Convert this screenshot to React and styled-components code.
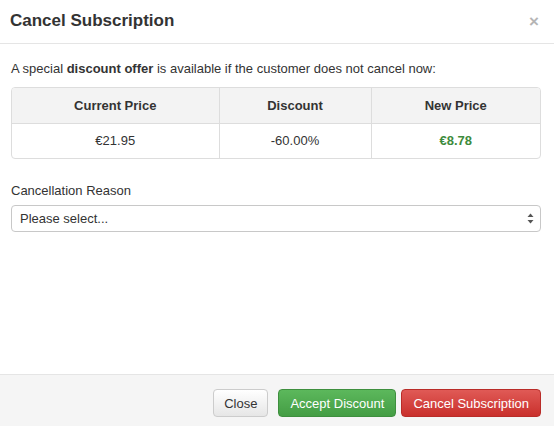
import React from "react";
import styled, { createGlobalStyle } from "styled-components";

const Global = createGlobalStyle`
  html, body { margin: 0; padding: 0; background: #fff; }
  body { font-family: "Liberation Sans", Arial, sans-serif; color: #333; font-size: 13px; }
  * { box-sizing: border-box; }
`;

const Modal = styled.div`
  width: 554px;
  height: 426px;
  display: flex;
  flex-direction: column;
  background: #fff;
`;

const Header = styled.div`
  height: 44px;
  border-bottom: 1px solid #e5e5e5;
  display: flex;
  align-items: center;
  justify-content: space-between;
  padding: 0 15px 2px 10px;
`;

const Title = styled.h4`
  margin: 0;
  font-size: 17px;
  font-weight: bold;
  color: #333;
`;

const CloseX = styled.span`
  color: #b5b5b5;
  font-size: 17px;
  font-weight: bold;
  line-height: 1;
  margin-top: 1px;
`;

const Body = styled.div`
  flex: 1;
  padding: 16px 13px 0 11px;
  display: flex;
  flex-direction: column;
`;

const Intro = styled.p`
  margin: 0 0 10px;
  font-size: 13px;
  line-height: 17px;
`;

const TableWrap = styled.div`
  border: 1px solid #ddd;
  border-radius: 4px;
  overflow: hidden;
`;

const Table = styled.table`
  width: 100%;
  border-collapse: collapse;
  table-layout: fixed;
  font-size: 13px;
`;

const Th = styled.th`
  background: #f3f3f3;
  height: 35px;
  font-weight: bold;
  text-align: center;
  border-bottom: 1px solid #ddd;
  border-left: ${(p) => (p.$first ? "none" : "1px solid #ddd")};
  width: ${(p) => p.$w};
  padding: 0;
`;

const Td = styled.td`
  height: 35px;
  text-align: center;
  border-left: ${(p) => (p.$first ? "none" : "1px solid #ddd")};
  color: ${(p) => (p.$green ? "#3d8b3d" : "#333")};
  font-weight: ${(p) => (p.$green ? "bold" : "normal")};
  padding: 0;
`;

const Label = styled.label`
  display: block;
  margin: 24px 0 6px 0;
  font-size: 13px;
  line-height: 16px;
`;

const Select = styled.div`
  height: 27px;
  border: 1px solid #c8c8c8;
  border-radius: 4px;
  display: flex;
  align-items: center;
  justify-content: space-between;
  padding: 0 6px 0 8px;
  font-size: 13px;
  background: #fff;
`;

const Footer = styled.div`
  height: 52px;
  border-top: 1px solid #e5e5e5;
  background: #f5f5f5;
  display: flex;
  justify-content: flex-end;
  align-items: flex-start;
  padding: 14px 13px 0 0;
`;

const Button = styled.button`
  height: 28px;
  padding: 0 ${(p) => (p.$variant ? "11px" : "10px")};
  margin-left: ${(p) => p.$ml || "5px"};
  font-family: "Liberation Sans", Arial, sans-serif;
  font-size: 13px;
  border-radius: 4px;
  border: 1px solid;
  cursor: pointer;
  ${(p) =>
    p.$variant === "success"
      ? `background: linear-gradient(#5cb85c, #449d44); border-color: #3e8f3e; color: #fff;`
      : p.$variant === "danger"
      ? `background: linear-gradient(#e05a56, #c9302c); border-color: #b92c28; color: #fff;`
      : `background: linear-gradient(#fff, #e6e6e6); border-color: #ccc; color: #333;`}
`;

export default function App() {
  return (
    <Modal>
      <Global />
      <Header>
        <Title>Cancel Subscription</Title>
        <CloseX>×</CloseX>
      </Header>
      <Body>
        <Intro>
          A special <b>discount offer</b> is available if the customer does not cancel now:
        </Intro>
        <TableWrap>
          <Table>
            <thead>
              <tr>
                <Th $first $w="207px">Current Price</Th>
                <Th $w="152px">Discount</Th>
                <Th>New Price</Th>
              </tr>
            </thead>
            <tbody>
              <tr>
                <Td $first>€21.95</Td>
                <Td>-60.00%</Td>
                <Td $green>€8.78</Td>
              </tr>
            </tbody>
          </Table>
        </TableWrap>
        <Label>Cancellation Reason</Label>
        <Select>
          <span>Please select...</span>
          <svg width="7" height="11" viewBox="0 0 7 11">
            <path d="M3.5 0.5 L6.5 4 L0.5 4 Z" fill="#555" />
            <path d="M3.5 10.5 L6.5 7 L0.5 7 Z" fill="#555" />
          </svg>
        </Select>
      </Body>
      <Footer>
        <Button>Close</Button>
        <Button $variant="success" $ml="10px">Accept Discount</Button>
        <Button $variant="danger">Cancel Subscription</Button>
      </Footer>
    </Modal>
  );
}
